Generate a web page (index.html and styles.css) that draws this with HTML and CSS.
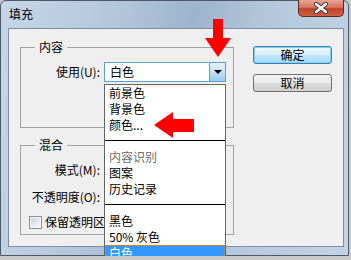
FILE: index.html
```html
<!DOCTYPE html>
<html lang="zh-CN">
<head>
    <meta charset="UTF-8">
    <title>填充</title>
    <link rel="stylesheet" href="styles.css">
</head>
<body>
    <div class="window">
        <div class="titlebar">
            <span class="title">填充</span>
            <div class="close">
                <svg width="18" height="12" viewBox="0 0 18 12">
                    <path d="M4 2 L14 10 M14 2 L4 10" stroke="#3b3b3b" stroke-width="4.2" stroke-linecap="round"/>
                    <path d="M4 2 L14 10 M14 2 L4 10" stroke="#ffffff" stroke-width="2.4" stroke-linecap="round"/>
                </svg>
            </div>
        </div>

        <div class="client">
            <div class="groups">
                <fieldset class="group group-content">
                    <legend>内容</legend>
                    <div class="row">
                        <label class="row-label">使用(U):</label>
                        <div class="combo combo-open">
                            <span class="combo-value">白色</span>
                            <span class="combo-button"><span class="caret"></span></span>
                        </div>
                    </div>
                </fieldset>

                <fieldset class="group group-blend">
                    <legend>混合</legend>
                    <div class="row">
                        <label class="row-label">模式(M):</label>
                        <div class="combo">
                            <span class="combo-value"></span>
                            <span class="combo-button"><span class="caret"></span></span>
                        </div>
                    </div>
                    <div class="row">
                        <label class="row-label">不透明度(O):</label>
                        <div class="field"></div>
                    </div>
                    <div class="check-row">
                        <span class="checkbox"></span>
                        <span class="check-label">保留透明区</span>
                    </div>
                </fieldset>
            </div>

            <div class="actions">
                <button class="btn btn-default">确定</button>
                <button class="btn">取消</button>
            </div>
        </div>

        <!-- open list of the 使用 combo -->
        <ul class="dropdown">
            <li>前景色</li>
            <li>背景色</li>
            <li>颜色...</li>
            <li class="separator"></li>
            <li class="disabled">内容识别</li>
            <li>图案</li>
            <li>历史记录</li>
            <li class="separator"></li>
            <li>黑色</li>
            <li>50% 灰色</li>
            <li class="selected">白色</li>
        </ul>

        <!-- red annotation arrows -->
        <svg class="marks" width="351" height="260" viewBox="0 0 351 260">
            <polygon points="213,19 223,19 223,38 231,38 218,57 205,38 213,38" fill="#ff0000"/>
            <polygon points="154,125 173,112 173,119 194,119 194,132 173,132 173,138" fill="#ff0000"/>
        </svg>
    </div>
</body>
</html>
```

FILE: styles.css
```css
body {
    margin: 0;
    background-color: #c9c9c9;
    font-family: "Noto Sans CJK SC", "Liberation Sans", sans-serif;
    font-size: 12px;
    color: #000;
}

.window {
    position: relative;
    box-sizing: border-box;
    width: 349px;
    height: 256px;
    padding: 0 4px 8px 7px;
    border: 1px solid #4b5a6b;
    border-radius: 6px 6px 0 0;
    background: linear-gradient(100deg, #c6d6e8 0%, #b3c7dc 30%, #9db4cc 50%, #b5c8dd 70%, #c3d3e5 100%);
}

.titlebar {
    display: flex;
    align-items: flex-start;
    height: 27px;
    padding-left: 1px;
}

.title {
    margin-top: 5px;
    line-height: 16px;
    font-size: 12px;
}

.close {
    display: flex;
    align-items: center;
    justify-content: center;
    width: 46px;
    height: 17px;
    margin-left: auto;
    margin-top: -1px;
    box-sizing: border-box;
    border: 1px solid #5b2a22;
    border-top: none;
    border-radius: 0 0 5px 5px;
    background: linear-gradient(#e9a492 0%, #d8755e 45%, #c2422c 55%, #cf5f45 100%);
}

.client {
    display: flex;
    box-sizing: border-box;
    height: 219px;
    padding: 10px 0 0 11px;
    border: 1px solid #7b8ea3;
    background-color: #efefef;
}

.groups {
    width: 214px;
}

.group {
    margin: 0;
    padding: 0;
    border: 1px solid #a3a3a3;
    min-width: 0;
}

.group legend {
    margin-left: 14px;
    padding: 0 4px;
    line-height: 16px;
}

.group-content {
    padding: 7px 0 45px;
}

.group-blend {
    margin-top: 9px;
    padding: 7px 0 4px;
}

.row {
    display: flex;
    align-items: center;
    height: 20px;
}

.row + .row {
    margin-top: 7px;
}

.row-label {
    width: 79px;
    margin-right: 4px;
    text-align: right;
    line-height: 16px;
}

.combo {
    display: flex;
    box-sizing: border-box;
    width: 122px;
    height: 20px;
    border: 1px solid #a9a9a9;
    background-color: #fff;
}

.combo-open {
    border-color: #5b9fd9;
}

.combo-value {
    flex: 1;
    padding-left: 5px;
    line-height: 18px;
}

.combo-button {
    display: flex;
    align-items: center;
    justify-content: center;
    width: 15px;
    border-left: 1px solid #5b9fd9;
    background: linear-gradient(#e6f3fc 0%, #c4e2f7 50%, #9bcbee 100%);
}

.caret {
    width: 0;
    height: 0;
    border-left: 4px solid transparent;
    border-right: 4px solid transparent;
    border-top: 4px solid #000;
}

.field {
    box-sizing: border-box;
    width: 60px;
    height: 20px;
    border: 1px solid #a9a9a9;
    background-color: #fff;
}

.check-row {
    display: flex;
    align-items: center;
    height: 16px;
    margin-top: 7px;
    padding-left: 8px;
    white-space: nowrap;
    line-height: 16px;
}

.checkbox {
    box-sizing: border-box;
    width: 13px;
    height: 13px;
    margin-right: 3px;
    border: 1px solid #8e8f8f;
    background: linear-gradient(135deg, #cbcfd5 0%, #eef0f2 70%, #fbfbfb 100%);
    box-shadow: inset 0 0 0 1px #f4f4f4;
}

.actions {
    display: flex;
    flex-direction: column;
    gap: 10px;
    margin-left: 19px;
    padding-top: 7px;
}

.btn {
    box-sizing: border-box;
    width: 79px;
    height: 18px;
    padding: 0;
    border: 1px solid #707070;
    border-radius: 3px;
    background: linear-gradient(#f3f3f3 0%, #ebebeb 50%, #dddddd 50%, #cfcfcf 100%);
    font-family: inherit;
    font-size: 12px;
    line-height: 16px;
    color: #000;
}

.btn-default {
    border-color: #3c7fb1;
    background: linear-gradient(#eaf6fd 0%, #d9f0fc 50%, #bee6fd 50%, #a7d9f5 100%);
    box-shadow: inset 0 0 0 1px #7fd0f5;
}

.dropdown {
    position: absolute;
    left: 103px;
    top: 83px;
    width: 122px;
    margin: 0;
    padding: 0;
    list-style: none;
    box-sizing: border-box;
    border: 1px solid #646464;
    border-bottom: none;
    background-color: #fff;
}

.dropdown li {
    height: 16px;
    padding-left: 4px;
    line-height: 16px;
    white-space: nowrap;
}

.dropdown .separator {
    height: 16px;
    padding: 0;
    background: linear-gradient(transparent 7px, #000 7px, #000 8px, transparent 8px);
}

.dropdown .disabled {
    color: #6d6d6d;
}

.dropdown .selected {
    background-color: #3399ff;
    color: #fff;
    outline: 1px dotted #e08a2c;
    outline-offset: -1px;
}

.marks {
    position: absolute;
    left: -1px;
    top: -1px;
    pointer-events: none;
}
```
